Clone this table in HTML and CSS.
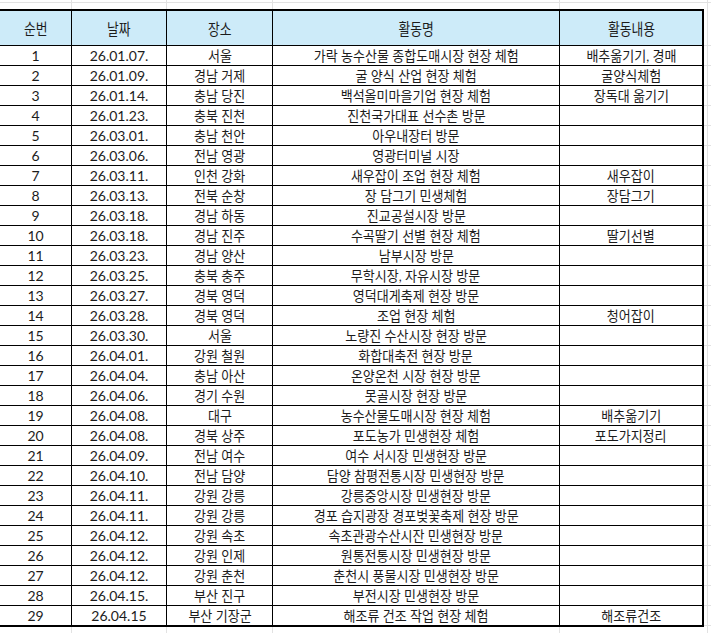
FILE: index.html
```html
<!DOCTYPE html>
<html lang="ko">
<head>
<meta charset="utf-8">
<title>활동 일정</title>
<link rel="stylesheet" href="styles.css">
</head>
<body>
<div class="sheet">
  <div class="row head">
    <div class="cell"><span>순번</span></div>
    <div class="cell"><span>날짜</span></div>
    <div class="cell"><span>장소</span></div>
    <div class="cell"><span>활동명</span></div>
    <div class="cell"><span>활동내용</span></div>
  </div>
  <div class="row"><div class="cell">1</div><div class="cell">26.01.07.</div><div class="cell"><span>서울</span></div><div class="cell"><span>가락 농수산물 종합도매시장 현장 체험</span></div><div class="cell"><span>배추옮기기, 경매</span></div></div>
  <div class="row"><div class="cell">2</div><div class="cell">26.01.09.</div><div class="cell"><span>경남 거제</span></div><div class="cell"><span>굴 양식 산업 현장 체험</span></div><div class="cell"><span>굴양식체험</span></div></div>
  <div class="row"><div class="cell">3</div><div class="cell">26.01.14.</div><div class="cell"><span>충남 당진</span></div><div class="cell"><span>백석올미마을기업 현장 체험</span></div><div class="cell"><span>장독대 옮기기</span></div></div>
  <div class="row"><div class="cell">4</div><div class="cell">26.01.23.</div><div class="cell"><span>충북 진천</span></div><div class="cell"><span>진천국가대표 선수촌 방문</span></div><div class="cell"></div></div>
  <div class="row"><div class="cell">5</div><div class="cell">26.03.01.</div><div class="cell"><span>충남 천안</span></div><div class="cell"><span>아우내장터 방문</span></div><div class="cell"></div></div>
  <div class="row"><div class="cell">6</div><div class="cell">26.03.06.</div><div class="cell"><span>전남 영광</span></div><div class="cell"><span>영광터미널 시장</span></div><div class="cell"></div></div>
  <div class="row"><div class="cell">7</div><div class="cell">26.03.11.</div><div class="cell"><span>인천 강화</span></div><div class="cell"><span>새우잡이 조업 현장 체험</span></div><div class="cell"><span>새우잡이</span></div></div>
  <div class="row"><div class="cell">8</div><div class="cell">26.03.13.</div><div class="cell"><span>전북 순창</span></div><div class="cell"><span>장 담그기 민생체험</span></div><div class="cell"><span>장담그기</span></div></div>
  <div class="row"><div class="cell">9</div><div class="cell">26.03.18.</div><div class="cell"><span>경남 하동</span></div><div class="cell"><span>진교공설시장 방문</span></div><div class="cell"></div></div>
  <div class="row"><div class="cell">10</div><div class="cell">26.03.18.</div><div class="cell"><span>경남 진주</span></div><div class="cell"><span>수곡딸기 선별 현장 체험</span></div><div class="cell"><span>딸기선별</span></div></div>
  <div class="row"><div class="cell">11</div><div class="cell">26.03.23.</div><div class="cell"><span>경남 양산</span></div><div class="cell"><span>남부시장 방문</span></div><div class="cell"></div></div>
  <div class="row"><div class="cell">12</div><div class="cell">26.03.25.</div><div class="cell"><span>충북 충주</span></div><div class="cell"><span>무학시장, 자유시장 방문</span></div><div class="cell"></div></div>
  <div class="row"><div class="cell">13</div><div class="cell">26.03.27.</div><div class="cell"><span>경북 영덕</span></div><div class="cell"><span>영덕대게축제 현장 방문</span></div><div class="cell"></div></div>
  <div class="row"><div class="cell">14</div><div class="cell">26.03.28.</div><div class="cell"><span>경북 영덕</span></div><div class="cell"><span>조업 현장 체험</span></div><div class="cell"><span>청어잡이</span></div></div>
  <div class="row"><div class="cell">15</div><div class="cell">26.03.30.</div><div class="cell"><span>서울</span></div><div class="cell"><span>노량진 수산시장 현장 방문</span></div><div class="cell"></div></div>
  <div class="row"><div class="cell">16</div><div class="cell">26.04.01.</div><div class="cell"><span>강원 철원</span></div><div class="cell"><span>화합대축전 현장 방문</span></div><div class="cell"></div></div>
  <div class="row"><div class="cell">17</div><div class="cell">26.04.04.</div><div class="cell"><span>충남 아산</span></div><div class="cell"><span>온양온천 시장 현장 방문</span></div><div class="cell"></div></div>
  <div class="row"><div class="cell">18</div><div class="cell">26.04.06.</div><div class="cell"><span>경기 수원</span></div><div class="cell"><span>못골시장 현장 방문</span></div><div class="cell"></div></div>
  <div class="row"><div class="cell">19</div><div class="cell">26.04.08.</div><div class="cell"><span>대구</span></div><div class="cell"><span>농수산물도매시장 현장 체험</span></div><div class="cell"><span>배추옮기기</span></div></div>
  <div class="row"><div class="cell">20</div><div class="cell">26.04.08.</div><div class="cell"><span>경북 상주</span></div><div class="cell"><span>포도농가 민생현장 체험</span></div><div class="cell"><span>포도가지정리</span></div></div>
  <div class="row"><div class="cell">21</div><div class="cell">26.04.09.</div><div class="cell"><span>전남 여수</span></div><div class="cell"><span>여수 서시장 민생현장 방문</span></div><div class="cell"></div></div>
  <div class="row"><div class="cell">22</div><div class="cell">26.04.10.</div><div class="cell"><span>전남 담양</span></div><div class="cell"><span>담양 참평전통시장 민생현장 방문</span></div><div class="cell"></div></div>
  <div class="row"><div class="cell">23</div><div class="cell">26.04.11.</div><div class="cell"><span>강원 강릉</span></div><div class="cell"><span>강릉중앙시장 민생현장 방문</span></div><div class="cell"></div></div>
  <div class="row"><div class="cell">24</div><div class="cell">26.04.11.</div><div class="cell"><span>강원 강릉</span></div><div class="cell"><span>경포 습지광장 경포벚꽃축제 현장 방문</span></div><div class="cell"></div></div>
  <div class="row"><div class="cell">25</div><div class="cell">26.04.12.</div><div class="cell"><span>강원 속초</span></div><div class="cell"><span>속초관광수산시잔 민생현장 방문</span></div><div class="cell"></div></div>
  <div class="row"><div class="cell">26</div><div class="cell">26.04.12.</div><div class="cell"><span>강원 인제</span></div><div class="cell"><span>원통전통시장 민생현장 방문</span></div><div class="cell"></div></div>
  <div class="row"><div class="cell">27</div><div class="cell">26.04.12.</div><div class="cell"><span>강원 춘천</span></div><div class="cell"><span>춘천시 풍물시장 민생현장 방문</span></div><div class="cell"></div></div>
  <div class="row"><div class="cell">28</div><div class="cell">26.04.15.</div><div class="cell"><span>부산 진구</span></div><div class="cell"><span>부전시장 민생현장 방문</span></div><div class="cell"></div></div>
  <div class="row"><div class="cell">29</div><div class="cell">26.04.15</div><div class="cell"><span>부산 기장군</span></div><div class="cell"><span>해조류 건조 작업 현장 체험</span></div><div class="cell"><span>해조류건조</span></div></div>
</div>
</body>
</html>
```

FILE: styles.css
```css
html, body {
  margin: 0;
  padding: 0;
}

body {
  width: 711px;
  height: 633px;
  overflow: hidden;
  background-color: #fff;
  background-image:
    linear-gradient(#e2e2e2, #e2e2e2),
    linear-gradient(#e2e2e2, #e2e2e2),
    linear-gradient(#e2e2e2, #e2e2e2),
    linear-gradient(#e2e2e2, #e2e2e2),
    linear-gradient(#e2e2e2, #e2e2e2),
    linear-gradient(#e2e2e2, #e2e2e2),
    repeating-linear-gradient(to bottom, #e2e2e2 0 1px, transparent 1px 20px);
  background-repeat: no-repeat;
  background-size:
    1px 100%, 1px 100%, 1px 100%, 1px 100%, 1px 100%,
    100% 1px,
    100% 100%;
  background-position:
    71px 0, 166px 0, 272px 0, 559px 0, 707px 0,
    0 2px,
    0 45px;
  font-family: Lato, "Noto Sans CJK KR", sans-serif;
  color: #1c1c1c;
}

.sheet {
  display: flex;
  flex-direction: column;
  gap: 1px;
  width: max-content;
  margin-top: 9px;
  background: #000;
  border-top: 2px solid #000;
  border-right: 2px solid #000;
  border-bottom: 2px solid #000;
}

.row {
  display: grid;
  grid-template-columns: 71px 94px 105px 286px 142px;
  column-gap: 1px;
  height: 19px;
}

.row.head {
  height: 34px;
}

.cell {
  display: flex;
  align-items: center;
  justify-content: center;
  background: #fff;
  font-size: 14px;
  line-height: 1;
  padding-top: 1px;
  white-space: nowrap;
}

.cell span {
  display: inline-block;
  transform: scaleX(0.93);
}

.head .cell {
  background: #cdebf9;
  font-size: 16px;
  padding-top: 2px;
}

.head .cell span {
  transform: scaleX(0.8);
}
```
